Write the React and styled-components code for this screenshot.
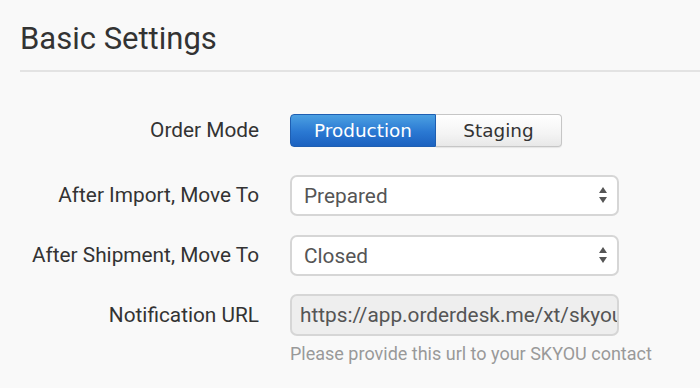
import React, { useState } from "react";
import styled, { createGlobalStyle } from "styled-components";

const GlobalStyle = createGlobalStyle`
  html, body {
    margin: 0;
    padding: 0;
    background: #f9f9f9;
  }
  body {
    font-family: Roboto, "Liberation Sans", sans-serif;
    color: #333;
  }
`;

const Page = styled.div`
  width: 700px;
  height: 388px;
  overflow: hidden;
  padding: 0 0 0 20px;
  box-sizing: border-box;
`;

const Title = styled.h2`
  margin: 0;
  padding: 21px 0 0 0;
  height: 72px;
  box-sizing: border-box;
  font-size: 31px;
  font-weight: 400;
  line-height: 36px;
  color: #333;
  border-bottom: 2px solid #e3e3e3;
`;

const Form = styled.div`
  padding-top: 42px;
`;

const Row = styled.div`
  display: flex;
  align-items: flex-start;
  margin-bottom: ${(p) => p.$gap || 19}px;
`;

const Label = styled.div`
  width: 239px;
  flex-shrink: 0;
  text-align: right;
  font-size: 20.8px;
  color: #333;
  line-height: ${(p) => p.$h || 41}px;
  margin-right: 31px;
  white-space: nowrap;
`;

const Control = styled.div`
  width: 329px;
`;

const ToggleGroup = styled.div`
  display: flex;
  height: 33px;
`;

const ToggleButton = styled.button`
  font-family: "DejaVu Sans", Verdana, sans-serif;
  font-size: 18.4px;
  height: 33px;
  padding: 0;
  cursor: pointer;
  box-sizing: border-box;
  width: ${(p) => p.$w}px;
  border-radius: ${(p) => (p.$first ? "4px 0 0 4px" : "0 4px 4px 0")};
  ${(p) =>
    p.$active
      ? `
    color: #fff;
    background: linear-gradient(#4ba0e2, #2a78d2 55%, #1c62c0);
    border: 1px solid #1f5fb2;
  `
      : `
    color: #333;
    background: linear-gradient(#ffffff, #f4f4f4 60%, #e8e8e8);
    border: 1px solid #c6c6c6;
    border-left: 0;
    box-shadow: 0 1px 1px rgba(0, 0, 0, 0.08);
  `}
`;

const SelectBox = styled.div`
  position: relative;
  height: 41px;
  box-sizing: border-box;
  border: 2px solid #d6d6d6;
  border-radius: 7px;
  background: #fff;
  display: flex;
  align-items: center;
  padding: 0 12px;
  font-size: 20.8px;
  color: #555;
`;

const Arrows = styled.svg`
  position: absolute;
  right: 10px;
  top: 10px;
`;

const UrlInput = styled.div`
  height: 42px;
  box-sizing: border-box;
  border: 2px solid #d6d6d6;
  border-radius: 7px;
  background: #eeeeee;
  display: flex;
  align-items: center;
  padding: 0 8px;
  font-size: 20.8px;
  color: #555;
  white-space: nowrap;
  overflow: hidden;
`;

const Help = styled.div`
  font-size: 18px;
  line-height: 21px;
  color: #999;
  margin-top: 7px;
  white-space: nowrap;
`;

const Select = ({ value }) => (
  <SelectBox>
    {value}
    <Arrows width="8" height="16" viewBox="0 0 8 16">
      <path d="M4 0 L8 6 L0 6 Z" fill="#555" />
      <path d="M4 16 L8 10 L0 10 Z" fill="#555" />
    </Arrows>
  </SelectBox>
);

export default function App() {
  const [mode, setMode] = useState("production");
  return (
    <Page>
      <GlobalStyle />
      <Title>Basic Settings</Title>
      <Form>
        <Row $gap={28}>
          <Label $h={33}>Order Mode</Label>
          <Control>
            <ToggleGroup>
              <ToggleButton
                $first
                $w={146}
                $active={mode === "production"}
                onClick={() => setMode("production")}
              >
                Production
              </ToggleButton>
              <ToggleButton
                $w={126}
                $active={mode === "staging"}
                onClick={() => setMode("staging")}
              >
                Staging
              </ToggleButton>
            </ToggleGroup>
          </Control>
        </Row>
        <Row>
          <Label>After Import, Move To</Label>
          <Control>
            <Select value="Prepared" />
          </Control>
        </Row>
        <Row $gap={18}>
          <Label>After Shipment, Move To</Label>
          <Control>
            <Select value="Closed" />
          </Control>
        </Row>
        <Row>
          <Label $h={42}>Notification URL</Label>
          <Control>
            <UrlInput>https://app.orderdesk.me/xt/skyou</UrlInput>
            <Help>Please provide this url to your SKYOU contact</Help>
          </Control>
        </Row>
      </Form>
    </Page>
  );
}
